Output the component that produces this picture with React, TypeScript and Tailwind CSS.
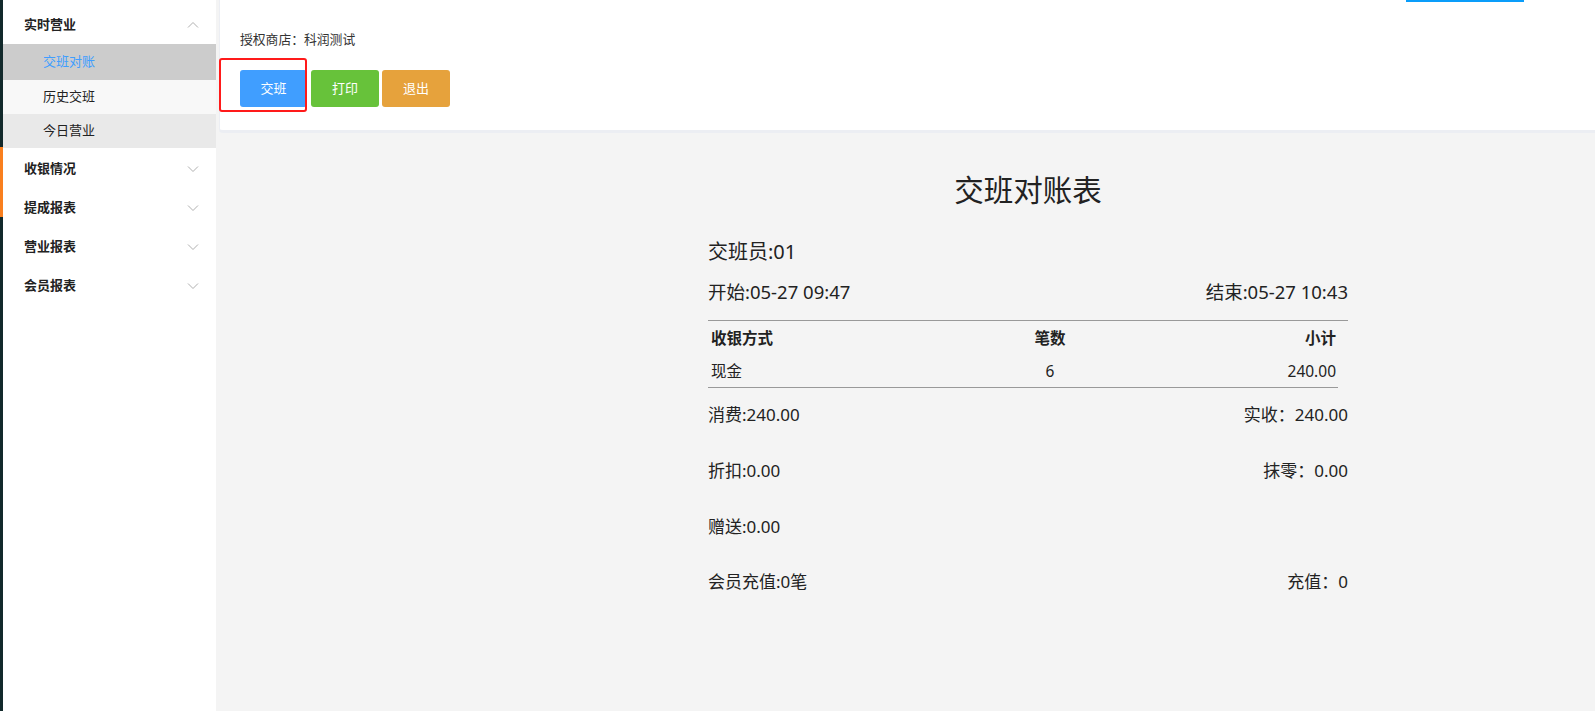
import React from "react";

const font = { fontFamily: '"Noto Sans", "Noto Sans CJK SC", sans-serif' };

function Chevron({ up }: { up?: boolean }) {
  return (
    <svg width="12" height="8" viewBox="0 0 12 8" className="shrink-0 text-[#b0b0b0]">
      {up ? (
        <path d="M1 6.5 L6 1.5 L11 6.5" fill="none" stroke="currentColor" strokeWidth="1" />
      ) : (
        <path d="M1 1.5 L6 6.5 L11 1.5" fill="none" stroke="currentColor" strokeWidth="1" />
      )}
    </svg>
  );
}

function TopItem({ label }: { label: string }) {
  return (
    <div className="flex h-[39px] items-center justify-between pl-[21px] pr-[17px]">
      <span className="text-[13px] font-bold text-[#222]">{label}</span>
      <Chevron />
    </div>
  );
}

export default function App() {
  return (
    <div className="flex h-screen w-full overflow-hidden bg-[#f4f4f4]" style={font}>
      {/* left strip */}
      <div className="flex w-[3px] shrink-0 flex-col bg-[#12292b]">
        <div className="h-[147px] shrink-0" />
        <div className="h-[70px] shrink-0 bg-[#f97f1e]" />
      </div>
      {/* sidebar */}
      <div className="w-[213px] shrink-0 bg-white pt-[6px]">
        <div className="flex h-[38px] items-center justify-between pl-[21px] pr-[17px]">
          <span className="text-[13px] font-bold text-[#222]">实时营业</span>
          <Chevron up />
        </div>
        <div className="flex h-[36px] items-center bg-[#cccccc] pl-[40px] text-[13px] text-[#409eff]">交班对账</div>
        <div className="flex h-[34px] items-center bg-[#f8f8f8] pl-[40px] text-[13px] text-[#222]">历史交班</div>
        <div className="flex h-[34px] items-center bg-[#e9e9e9] pl-[40px] text-[13px] text-[#222]">今日营业</div>
        <div className="pt-[1px]">
          <TopItem label="收银情况" />
          <TopItem label="提成报表" />
          <TopItem label="营业报表" />
          <TopItem label="会员报表" />
        </div>
      </div>
      {/* main */}
      <div className="flex min-w-0 flex-1 flex-col">
        <div className="relative ml-[3px] h-[133px] shrink-0 rounded-bl-[4px] border-b-[3px] border-l border-[#eceef3] bg-white pl-[20px] pt-[31px]">
          <div className="absolute left-[1186px] top-0 h-[2px] w-[118px] bg-[#0a9dfa]" />
          <div className="text-[12.8px] leading-[16px] text-[#333]">授权商店：科润测试</div>
          <div className="relative mt-[23px] flex gap-[4px]">
            <button className="h-[37px] w-[67px] rounded-[3px] bg-[#409eff] text-[13px] text-white">交班</button>
            <button className="h-[37px] w-[68px] rounded-[3px] bg-[#67c23a] text-[13px] text-white">打印</button>
            <button className="ml-[-1px] h-[37px] w-[68px] rounded-[3px] bg-[#e6a23c] text-[13px] text-white">退出</button>
            <div className="pointer-events-none absolute left-[-21px] top-[-12px] h-[54px] w-[88px] rounded-[3px] border-2 border-[#ff1a1a]" />
          </div>
        </div>
        <div className="ml-[492px] w-[640px] pt-[38px] text-[#222]">
          <div className="text-center text-[29.5px] leading-[38px]">交班对账表</div>
          <div className="mt-[29px] text-[20px] leading-[28px]">交班员:01</div>
          <div className="mt-[13px] flex justify-between text-[18.5px] leading-[26px]">
            <span>开始:05-27 09:47</span>
            <span>结束:05-27 10:43</span>
          </div>
          <div className="mt-[15px] border-t border-[#999]" />
          <div className="w-[630px]">
            <div className="flex h-[36px] items-center pl-[3px] text-[15.5px] font-bold">
              <span className="w-[307px]">收银方式</span>
              <span className="w-[64px] text-center">笔数</span>
              <span className="flex-1 pr-[2px] text-right">小计</span>
            </div>
            <div className="flex h-[30px] items-center pl-[3px] text-[15.5px]">
              <span className="w-[307px]">现金</span>
              <span className="w-[64px] text-center">6</span>
              <span className="flex-1 pr-[2px] text-right">240.00</span>
            </div>
            <div className="border-t border-[#999]" />
          </div>
          <div className="text-[17px] leading-[24px]">
            <div className="mt-[15px] flex justify-between">
              <span>消费:240.00</span>
              <span>实收：240.00</span>
            </div>
            <div className="mt-[32px] flex justify-between">
              <span>折扣:0.00</span>
              <span>抹零：0.00</span>
            </div>
            <div className="mt-[32px] flex justify-between">
              <span>赠送:0.00</span>
              <span></span>
            </div>
            <div className="mt-[31px] flex justify-between">
              <span>会员充值:0笔</span>
              <span>充值：0</span>
            </div>
          </div>
        </div>
      </div>
    </div>
  );
}
